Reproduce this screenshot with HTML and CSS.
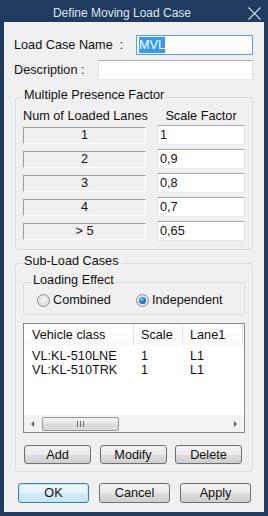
FILE: index.html
```html
<!DOCTYPE html>
<html lang="en">
<head>
  <meta charset="UTF-8">
  <title>Define Moving Load Case</title>
  <link rel="stylesheet" href="styles.css">
</head>
<body>

<div class="dialog">
  <div class="titlebar">
    <span class="title">Define Moving Load Case</span>
    <span class="close">
      <svg width="13" height="13" viewBox="0 0 13 13"><path d="M0.5 0.5 L12.5 12.5 M12.5 0.5 L0.5 12.5" stroke="#dfe6ef" stroke-width="1.1" fill="none"/></svg>
    </span>
  </div>

  <div class="content">
    <div class="field-row">
      <span class="field-label">Load Case Name&nbsp;&nbsp;:</span>
      <div class="textbox name-box focused"><span class="selected">MVL</span></div>
    </div>
    <div class="field-row">
      <span class="field-label">Description :</span>
      <div class="textbox desc-box"></div>
    </div>

    <div class="group mpf">
      <div class="group-title">Multiple Presence Factor</div>
      <div class="mpf-grid">
        <div class="col-head">Num of Loaded Lanes</div>
        <div class="col-head">Scale Factor</div>
        <div class="lane">1</div><div class="textbox">1</div>
        <div class="lane">2</div><div class="textbox">0,9</div>
        <div class="lane">3</div><div class="textbox">0,8</div>
        <div class="lane">4</div><div class="textbox">0,7</div>
        <div class="lane">&gt; 5</div><div class="textbox">0,65</div>
      </div>
    </div>

    <div class="group sub">
      <div class="group-title">Sub-Load Cases</div>

      <div class="group effect">
        <div class="group-title">Loading Effect</div>
        <div class="radio-row">
          <label class="radio-item"><span class="radio"></span>Combined</label>
          <label class="radio-item"><span class="radio checked"></span>Independent</label>
        </div>
      </div>

      <div class="listview">
        <div class="lv-head">
          <div class="lv-col">Vehicle class</div>
          <div class="lv-col">Scale</div>
          <div class="lv-col">Lane1</div>
          <div class="lv-col"></div>
        </div>
        <div class="lv-body">
          <div class="lv-row"><span>VL:KL-510LNE</span><span>1</span><span>L1</span></div>
          <div class="lv-row"><span>VL:KL-510TRK</span><span>1</span><span>L1</span></div>
        </div>
        <div class="hscroll">
          <span class="arrow left"></span>
          <div class="track">
            <div class="thumb"><span class="grip"></span></div>
          </div>
          <span class="arrow right"></span>
        </div>
      </div>

      <div class="btn-row sub-buttons">
        <button class="btn">Add</button>
        <button class="btn">Modify</button>
        <button class="btn">Delete</button>
      </div>
    </div>

    <div class="btn-row main-buttons">
      <button class="btn default">OK</button>
      <button class="btn">Cancel</button>
      <button class="btn">Apply</button>
    </div>
  </div>
</div>

</body>
</html>
```

FILE: styles.css
```css
* {
  margin: 0;
  padding: 0;
  box-sizing: border-box;
}

body {
  font-family: "Liberation Sans", Arial, sans-serif;
  font-size: 12.7px;
  color: #111;
  background-color: #203a60;
  margin: 0;
}

.dialog {
  width: 268px;
  height: 516px;
  background-color: #203a60;
  display: flex;
  flex-direction: column;
}

/* title bar */
.titlebar {
  height: 22px;
  display: flex;
  align-items: center;
  flex-shrink: 0;
}

.title {
  flex: 1;
  text-align: center;
  color: #dfe6ef;
  font-size: 12px;
  padding-top: 3px;
}

.close {
  width: 24px;
  display: flex;
  padding-left: 4px;
  padding-top: 5px;
}

/* client area */
.content {
  flex: 1;
  margin: 0 4px 4px;
  background-color: #f0f0f0;
  padding: 13px 11px 0 10px;
  display: flex;
  flex-direction: column;
}

.field-row {
  display: flex;
  align-items: center;
  height: 20px;
}

.field-row + .field-row {
  margin-top: 5px;
}

.textbox {
  background-color: #fff;
  border: 1px solid #abadb3;
  border-color: #abadb3 #dbdfe6 #e3e9ef #e2e3ea;
  height: 20px;
  line-height: 18px;
  padding-left: 2px;
  white-space: nowrap;
}

.name-box {
  width: 117px;
  margin-left: auto;
}

.desc-box {
  width: 155px;
  margin-left: auto;
}

.focused {
  border-color: #569de5;
}

.selected {
  background-color: #3399ff;
  color: #fff;
  padding: 1px 0;
}

/* group boxes, title sits on the top border */
.group {
  border: 1px solid #d5dfe5;
  border-radius: 3px;
  padding: 0 7px 7px;
  margin-left: 1px;
}

.group-title {
  width: fit-content;
  margin-top: -10px;
  padding: 0 2px 0 1px;
  line-height: 14px;
  background-color: #f0f0f0;
}

.mpf {
  margin-top: 17px;
  padding-bottom: 8px;
}

.mpf-grid {
  display: grid;
  grid-template-columns: 123px 88px;
  grid-template-rows: 14px repeat(5, 20px);
  column-gap: 11px;
  row-gap: 4px;
  margin-top: 5px;
}

.col-head {
  text-align: center;
  white-space: nowrap;
  line-height: 18px;
}

.lane {
  height: 17px;
  align-self: center;
  border: 1px solid;
  border-color: #a0a0a0 #fff #fff #a0a0a0;
  text-align: center;
  line-height: 15px;
}

.sub {
  margin-top: 13px;
}

.effect {
  margin: 14px 0 0;
}

.effect .group-title {
  margin-left: 1px;
}

.radio-row {
  display: flex;
  align-items: center;
  padding-left: 6px;
  margin-top: 6px;
}

.radio-item {
  display: flex;
  align-items: center;
  gap: 3px;
}

.radio-item:first-child {
  width: 99px;
}

.radio {
  width: 13px;
  height: 13px;
  border-radius: 50%;
  border: 1px solid #8e8f8f;
  background: radial-gradient(circle at 50% 40%, #f4f4f4, #d8d8d8);
  display: flex;
  align-items: center;
  justify-content: center;
}

.radio.checked::after {
  content: "";
  width: 7px;
  height: 7px;
  border-radius: 50%;
  background: radial-gradient(circle at 40% 35%, #7fd0ff 0, #1b7fc4 45%, #0a4f86 100%);
}

/* list view */
.listview {
  margin-top: 8px;
  height: 110px;
  border: 1px solid #828790;
  background-color: #fff;
  display: flex;
  flex-direction: column;
}

.lv-head,
.lv-row {
  display: grid;
  grid-template-columns: 110px 49px 60px 1fr;
}

.lv-head {
  height: 22px;
  line-height: 22px;
  background: linear-gradient(#fff, #fbfbfb);
}

.lv-col {
  border-right: 1px solid #e5e5e5;
  padding-left: 7px;
  white-space: nowrap;
}

.lv-col:first-child {
  padding-left: 8px;
}

.lv-col:last-child {
  border-right: none;
}

.lv-body {
  flex: 1;
  padding-top: 3px;
}

.lv-row {
  height: 14px;
  line-height: 14px;
  white-space: nowrap;
}

.lv-row span {
  padding-left: 7px;
}

.lv-row span:first-child {
  padding-left: 8px;
}

.hscroll {
  height: 17px;
  display: flex;
  align-items: center;
  background-color: #f2f2f2;
}

.arrow {
  width: 17px;
  height: 17px;
  display: flex;
  align-items: center;
  justify-content: center;
}

.arrow::before {
  content: "";
  border-top: 3px solid transparent;
  border-bottom: 3px solid transparent;
}

.arrow.left::before {
  border-right: 3px solid #606060;
}

.arrow.right::before {
  border-left: 3px solid #606060;
}

.track {
  flex: 1;
  height: 17px;
  display: flex;
  align-items: center;
  padding-left: 1px;
}

.thumb {
  width: 77px;
  height: 14px;
  border: 1px solid #979797;
  border-radius: 2px;
  background: linear-gradient(#f3f3f3, #e5e5e5 50%, #d9d9d9 51%, #dcdcdc);
  display: flex;
  align-items: center;
  justify-content: center;
}

.grip {
  width: 7px;
  height: 6px;
  border-left: 1px solid #6e6e6e;
  border-right: 1px solid #6e6e6e;
  background: linear-gradient(to right, transparent 2px, #6e6e6e 2px, #6e6e6e 3px, transparent 3px);
}

/* buttons */
.btn-row {
  display: flex;
  justify-content: space-between;
}

.sub-buttons {
  margin-top: 12px;
  padding: 0 3px 0 1px;
}

.sub-buttons .btn {
  width: 67px;
}

.main-buttons {
  margin-top: 11px;
  padding: 0 2px 0 4px;
}

.main-buttons .btn {
  width: 71px;
  height: 20px;
}

.btn {
  height: 19px;
  font-family: inherit;
  font-size: inherit;
  color: #111;
  border: 1px solid #707070;
  border-radius: 3px;
  background: linear-gradient(#f2f2f2, #ebebeb 50%, #dddddd 51%, #cfcfcf);
  line-height: 16px;
}

.btn.default {
  border-color: #3c7fb1;
  background: linear-gradient(#eef7fd, #e3f2fb 50%, #d3ebf8 51%, #c9e5f5);
  box-shadow: inset 0 0 0 1px #c4e5f6;
}
```
